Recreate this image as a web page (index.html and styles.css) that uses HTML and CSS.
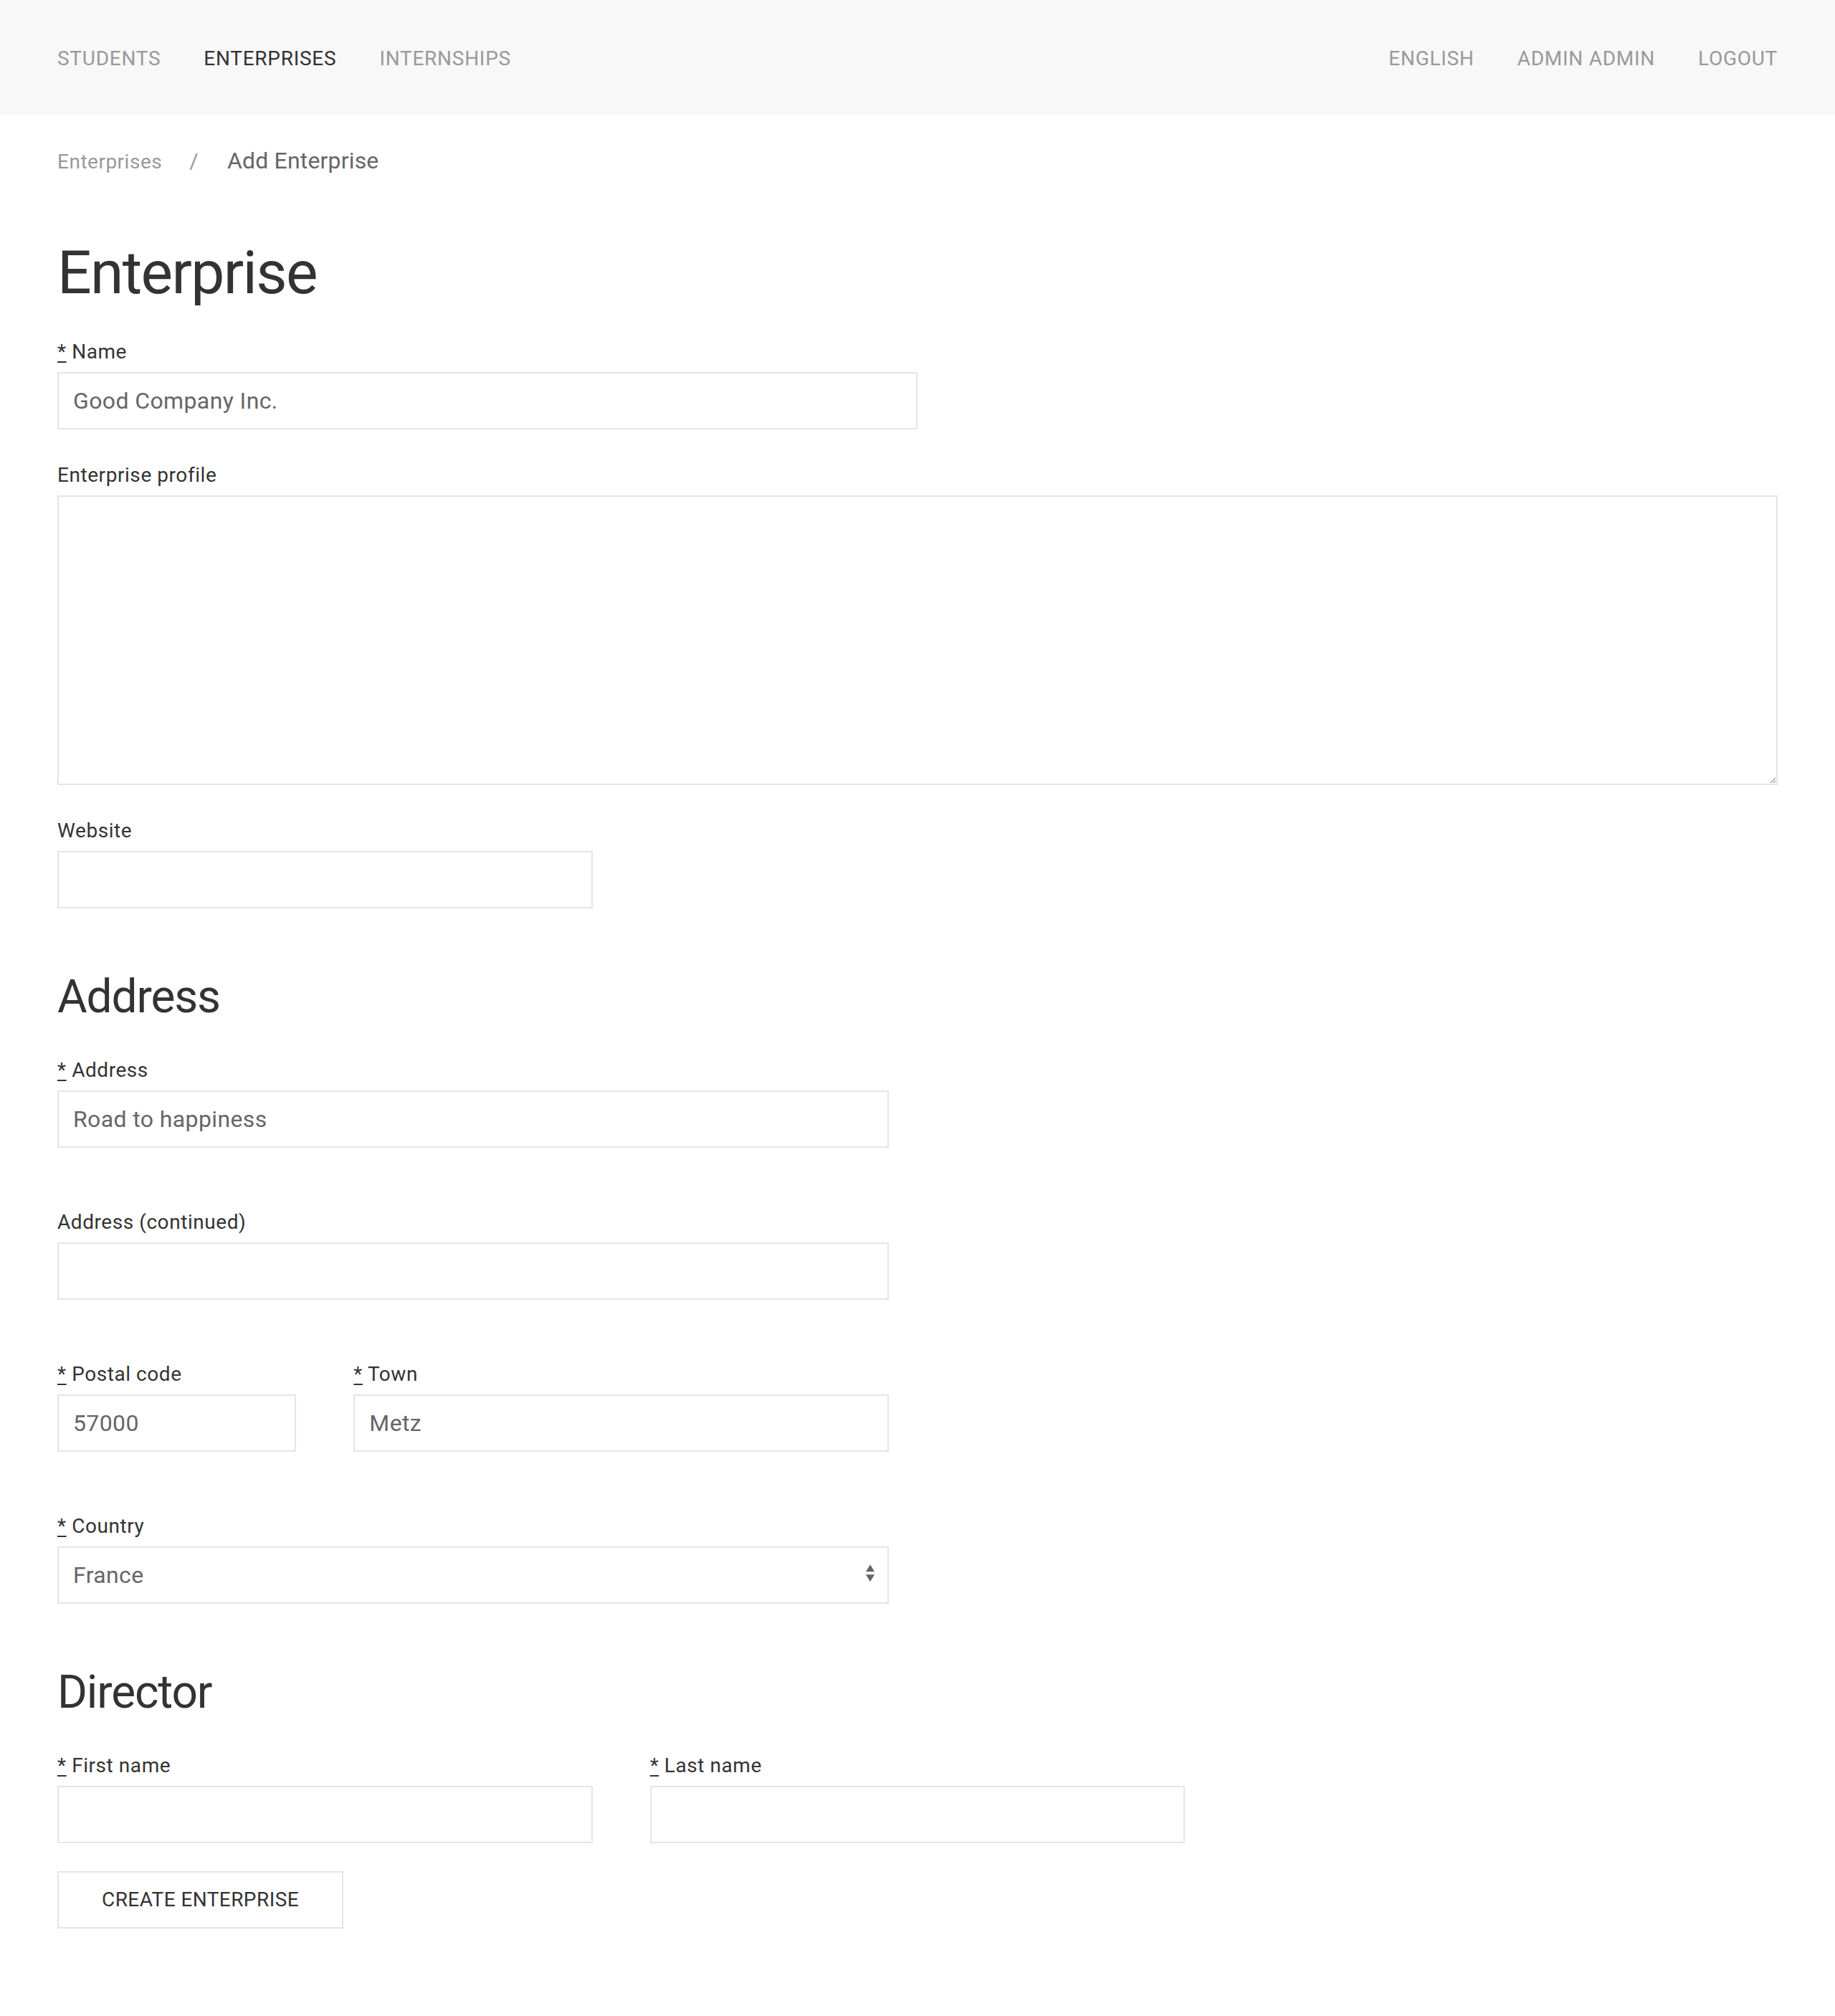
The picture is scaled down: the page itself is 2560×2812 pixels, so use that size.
FILE: index.html
```html
<!DOCTYPE html>
<html lang="en">
<head>
<meta charset="utf-8">
<title>Add Enterprise</title>
<link rel="stylesheet" href="styles.css">
</head>
<body>
<nav class="navbar">
  <ul class="nav">
    <li><a href="#">Students</a></li>
    <li class="active"><a href="#">Enterprises</a></li>
    <li><a href="#">Internships</a></li>
  </ul>
  <ul class="nav">
    <li><a href="#">English</a></li>
    <li><a href="#">Admin Admin</a></li>
    <li><a href="#">Logout</a></li>
  </ul>
</nav>
<main class="container">
  <ul class="breadcrumb">
    <li><a href="#">Enterprises</a></li>
    <li class="divider">/</li>
    <li class="current">Add Enterprise</li>
  </ul>

  <h1 class="title">Enterprise</h1>

  <div class="field">
    <label class="label"><abbr title="required">*</abbr> Name</label>
    <input class="input w-half" type="text" value="Good Company Inc.">
  </div>

  <div class="field">
    <label class="label">Enterprise profile</label>
    <textarea class="textarea"></textarea>
  </div>

  <div class="grid-3 field">
    <div>
      <label class="label">Website</label>
      <input class="input" type="text" value="">
    </div>
  </div>

  <h2 class="section">Address</h2>

  <div class="grid-2">
    <div class="field">
      <label class="label"><abbr title="required">*</abbr> Address</label>
      <input class="input" type="text" value="Road to happiness">
    </div>
  </div>

  <div class="grid-2 gap-row">
    <div class="field">
      <label class="label">Address (continued)</label>
      <input class="input" type="text" value="">
    </div>
  </div>

  <div class="grid-2 gap-row">
    <div class="grid-3 sub">
      <div>
        <label class="label"><abbr title="required">*</abbr> Postal code</label>
        <input class="input" type="text" value="57000">
      </div>
      <div class="span-2">
        <label class="label"><abbr title="required">*</abbr> Town</label>
        <input class="input" type="text" value="Metz">
      </div>
    </div>
  </div>

  <div class="grid-2 gap-row">
    <div>
      <label class="label"><abbr title="required">*</abbr> Country</label>
      <div class="select-wrap">
        <select class="select">
          <option>France</option>
          <option>Germany</option>
          <option>Luxembourg</option>
        </select>
        <svg class="select-icon" width="48" height="32" viewBox="0 0 24 16" aria-hidden="true">
          <polygon fill="#666" points="12 1 9 6 15 6"></polygon>
          <polygon fill="#666" points="12 13 9 8 15 8"></polygon>
        </svg>
      </div>
    </div>
  </div>

  <h2 class="section">Director</h2>

  <div class="grid-3">
    <div>
      <label class="label"><abbr title="required">*</abbr> First name</label>
      <input class="input" type="text" value="">
    </div>
    <div>
      <label class="label"><abbr title="required">*</abbr> Last name</label>
      <input class="input" type="text" value="">
    </div>
  </div>

  <div class="actions">
    <button class="button" type="submit">Create Enterprise</button>
  </div>
</main>
</body>
</html>
```

FILE: styles.css
```css
* { box-sizing: border-box; }

html, body {
  margin: 0;
  padding: 0;
  background: #fff;
}

body {
  font-family: Roboto, "Liberation Sans", Arial, sans-serif;
  font-size: 32px;
  line-height: 1.5;
  color: #666;
}

a { text-decoration: none; color: inherit; }

ul { list-style: none; margin: 0; padding: 0; }

/* navbar */
.navbar {
  background: #f8f8f8;
  height: 160px;
  padding: 0 80px;
  display: flex;
  justify-content: space-between;
  align-items: center;
}

.nav {
  display: flex;
  gap: 60px;
}

.nav a {
  display: block;
  padding-top: 3px;
  font-size: 28px;
  line-height: 157px;
  letter-spacing: 0.026em;
  text-transform: uppercase;
  color: #999;
}

.nav .active a { color: #333; }

/* main */
.container {
  padding: 0 80px 80px;
}

.breadcrumb {
  display: flex;
  align-items: baseline;
  margin-top: 40px;
  font-size: 28px;
  letter-spacing: 0.018em;
  color: #999;
}

.breadcrumb .divider {
  margin: 0 40px 0 38px;
  font-size: 30px;
}

.breadcrumb .current {
  font-size: 32px;
  letter-spacing: 0.005em;
  color: #666;
}

.title {
  margin: 83px 0 35px;
  font-size: 84px;
  font-weight: 400;
  line-height: 1.2;
  letter-spacing: -0.02em;
  color: #333;
}

.section {
  margin: 82px 0 37px;
  font-size: 64px;
  font-weight: 400;
  line-height: 1.3;
  letter-spacing: -0.018em;
  color: #333;
}

.field + .field { margin-top: 40px; }

.label {
  display: block;
  margin-bottom: 7px;
  padding-top: 3px;
  font-size: 28px;
  line-height: 42px;
  letter-spacing: 0.02em;
  color: #333;
}

.label abbr {
  text-decoration: underline;
  text-decoration-thickness: 2px;
  text-underline-offset: 4px;
  cursor: help;
}

.input,
.textarea,
.select {
  display: block;
  width: 100%;
  margin: 0;
  border: 2px solid #e5e5e5;
  border-radius: 0;
  background: #fff;
  color: #666;
  font-family: inherit;
  font-size: 32px;
  letter-spacing: 0.012em;
  outline: none;
}

.input,
.select {
  height: 80px;
  padding: 0 20px;
}

.w-half { width: 50%; }

.textarea {
  height: 404px;
  padding: 8px 20px;
  line-height: 1.5;
  resize: vertical;
}

.select-wrap { position: relative; }

.select {
  appearance: none;
  -webkit-appearance: none;
  padding-right: 48px;
}

.select-icon {
  position: absolute;
  right: 2px;
  top: 50%;
  transform: translateY(-52%);
  pointer-events: none;
}

.grid-3 {
  display: grid;
  grid-template-columns: repeat(3, 1fr);
  column-gap: 80px;
}

.grid-3 .span-2 { grid-column: span 2; }

.grid-2 {
  display: grid;
  grid-template-columns: repeat(2, 1fr);
  column-gap: 80px;
}

.gap-row { margin-top: 80px; }

.actions { margin-top: 39px; }

.button {
  display: inline-block;
  height: 80px;
  padding: 0 60px;
  border: 2px solid #e5e5e5;
  border-radius: 0;
  background: transparent;
  color: #333;
  font-family: inherit;
  font-size: 28px;
  line-height: 76px;
  letter-spacing: 0.015em;
  text-transform: uppercase;
  cursor: pointer;
}
```
